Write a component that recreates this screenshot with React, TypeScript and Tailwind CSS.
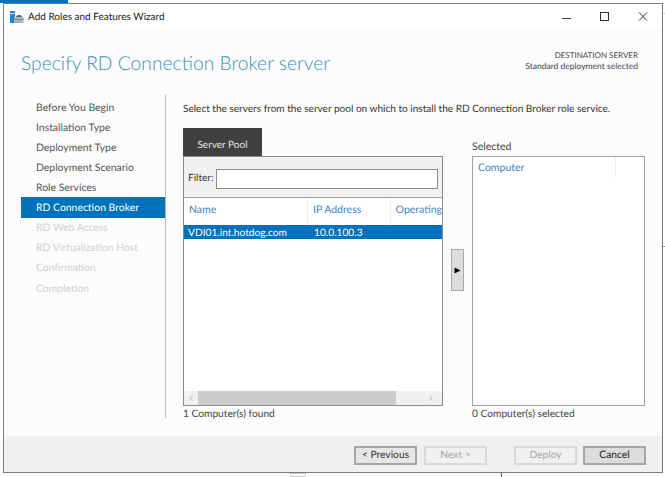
import { ChevronLeft, ChevronRight } from "lucide-react";

const steps = [
  { label: "Before You Begin", state: "done" },
  { label: "Installation Type", state: "done" },
  { label: "Deployment Type", state: "done" },
  { label: "Deployment Scenario", state: "done" },
  { label: "Role Services", state: "done" },
  { label: "RD Connection Broker", state: "active" },
  { label: "RD Web Access", state: "off" },
  { label: "RD Virtualization Host", state: "off" },
  { label: "Confirmation", state: "off" },
  { label: "Completion", state: "off" },
];

const WizardIcon = () => (
  <svg width="14" height="14" viewBox="0 0 14 14" className="shrink-0">
    <rect x="0" y="1" width="5" height="12" fill="#1c86d1" />
    <rect x="0" y="3" width="5" height="1" fill="#cfe6f7" />
    <path d="M6 6.5 L7.5 5 H10.5 L12 6.5 V7 H6 Z" fill="#5d6b75" />
    <rect x="4" y="7" width="9.5" height="6" fill="#a9b4bc" />
    <rect x="4" y="9" width="9.5" height="1" fill="#7d8a94" />
  </svg>
);

const FooterButton = ({
  label,
  disabled,
  dark,
}: {
  label: string;
  disabled?: boolean;
  dark?: boolean;
}) => (
  <div
    className={`w-[63px] h-[19px] flex items-center justify-center border-2 pt-[2px] text-[10.25px] ${
      disabled
        ? "border-[#d9d9d9] bg-[#f0f0f0] text-[#a6a6a6]"
        : dark
          ? "border-[#a6a6a6] bg-[#dcdcdc] text-[#1a1a1a]"
          : "border-[#a6a6a6] bg-[#e6e6e6] text-[#333333]"
    }`}
  >
    {label}
  </div>
);

export default function App() {
  return (
    <div className="relative w-[665px] h-[477px] overflow-hidden bg-white pl-[3px] pt-[3px] font-['Lato',sans-serif] [text-rendering:geometricPrecision]">
      {/* bits of the desktop showing behind the window */}
      <div className="absolute left-0 top-0 w-[68px] h-[3px] bg-[#0072c6]" />
      <div className="absolute left-[501px] top-[473px] w-px h-[4px] bg-[#555555]" />
      <div className="absolute left-[290px] top-[473px] w-[16px] h-[4px] border border-[#cccccc]" />
      <div className="absolute left-[663px] top-[13px] w-[2px] h-px bg-[#cccccc]" />
      <div className="absolute left-[663px] top-[246px] w-[2px] h-px bg-[#999999]" />

      <div className="w-[660px] h-[470px] flex flex-col border border-[#7a7a7a] bg-[#fcfcfc] text-[#333333]">
        {/* title bar */}
        <div className="h-[25px] shrink-0 bg-white flex items-center pl-[6px] pr-0 gap-[4px]">
          <WizardIcon />
          <span className="text-[10px] pt-[2px] text-[#1a1a1a] flex-1">Add Roles and Features Wizard</span>
          <svg width="100" height="12" viewBox="0 0 100 12" className="text-[#333333] mr-[13px] shrink-0">
            <path d="M13 7.5 H22" stroke="currentColor" strokeWidth="1" />
            <rect x="51.5" y="1.5" width="8" height="8" fill="none" stroke="currentColor" strokeWidth="1" />
            <path d="M90 1.5 L98 9.5 M98 1.5 L90 9.5" stroke="currentColor" strokeWidth="1" />
          </svg>
        </div>

        {/* header */}
        <div className="h-[66px] shrink-0 flex justify-between pl-[17px] pr-[24px]">
          <h1 className="mt-[21px] text-[19.3px] leading-[28px] text-[#3d8fb5] font-light">
            Specify RD Connection Broker server
          </h1>
          <div className="mt-[21px] text-right leading-[11px] text-[#444444]">
            <div className="text-[8px]">DESTINATION SERVER</div>
            <div className="text-[8.5px]">Standard deployment selected</div>
          </div>
        </div>

        {/* body */}
        <div className="flex-1 flex min-h-0">
          <div className="w-[144px] ml-[17px] shrink-0 pt-[2px]">
            {steps.map((step) => (
              <div
                key={step.label}
                className={`h-[20.1px] flex items-center pl-[15px] pt-[3px] text-[10.4px] ${
                  step.state === "active"
                    ? "bg-[#0072bc] text-white"
                    : step.state === "off"
                      ? "text-[#d0d0d0]"
                      : "text-[#555555]"
                }`}
              >
                {step.label}
              </div>
            ))}
          </div>
          <div className="w-px h-[323px] bg-[#b8b8b8] shrink-0" />

          <div className="flex-1 pl-[17px] pt-[7px]">
            <p className="text-[10.05px] leading-[15px] text-[#333333] whitespace-nowrap">
              Select the servers from the server pool on which to install the RD Connection Broker role service.
            </p>

            <div className="flex mt-[11px]">
              {/* server pool */}
              <div className="w-[260px] shrink-0">
                <div className="w-[79px] h-[28px] bg-[#404040] text-[#e8e8e8] text-[10px] flex items-center justify-center pt-[6px]">
                  Server Pool
                </div>
                <div className="h-[250px] flex flex-col border border-[#8c8c8c] bg-white">
                  <div className="h-[41px] shrink-0 flex items-center justify-between pl-[4px] pr-[4px] pt-[3px] bg-[#f0f0f0] border-b border-[#a0a0a0] text-[10px] text-[#333333]">
                    <span>Filter:</span>
                    <div className="w-[222px] h-[20px] bg-white border border-[#8c8c8c]" />
                  </div>
                  <div className="h-[27px] shrink-0 flex text-[10.5px] text-[#3a86c8] overflow-hidden whitespace-nowrap">
                    <span className="w-[126px] pl-[5px] pb-[1px] border-r border-[#eeeeee] h-full flex items-center">Name</span>
                    <span className="w-[84px] pl-[5px] pb-[1px] border-r border-[#eeeeee] h-full flex items-center">IP Address</span>
                    <span className="pl-[5px] pb-[1px] h-full flex items-center">Operating</span>
                  </div>
                  <div className="h-[14px] shrink-0 flex items-center bg-[#0072bc] text-white text-[10.2px] pt-[3px]">
                    <span className="w-[125px] pl-[4px]">VDI01.int.hotdog.com</span>
                    <span className="pl-[5px]">10.0.100.3</span>
                  </div>
                  <div className="flex-1" />
                  <div className="h-[14px] shrink-0 flex items-center bg-[#f0f0f0] text-[#a6a6a6]">
                    <ChevronLeft size={10} className="w-[14px]" />
                    <div className="w-[198px] h-full bg-[#cdcdcd]" />
                    <div className="flex-1" />
                    <ChevronRight size={10} className="w-[14px] mr-[4px]" />
                  </div>
                </div>
                <div className="mt-[1px] text-[10.2px] leading-[14px] text-[#444444]">1 Computer(s) found</div>
              </div>

              {/* add button */}
              <div className="w-[29px] shrink-0 pl-[8px] pt-[121px]">
                <div className="w-[13px] h-[42px] bg-[#dcdcdc] border border-[#a6a6a6] flex items-center justify-center">
                  <svg width="7" height="7" viewBox="0 0 7 7">
                    <path d="M0.5 0.5 L6.5 3.5 L0.5 6.5 Z" fill="#000000" />
                  </svg>
                </div>
              </div>

              {/* selected */}
              <div className="w-[173px] shrink-0">
                <div className="h-[28px] flex items-end pb-[2px] text-[10.5px] leading-[14px] text-[#444444]">Selected</div>
                <div className="h-[250px] border border-[#a0a0a0] bg-white">
                  <div className="h-[20px] flex items-center">
                    <span className="w-[143px] h-full pl-[5px] pt-[4px] flex items-center border-r border-[#eeeeee] text-[10.5px] text-[#3a86c8]">
                      Computer
                    </span>
                  </div>
                </div>
                <div className="mt-[1px] text-[10.2px] leading-[14px] text-[#444444]">0 Computer(s) selected</div>
              </div>
            </div>
          </div>
        </div>

        {/* footer */}
        <div className="h-[36px] shrink-0 bg-[#f0f0f0] flex items-center justify-end pr-[16px] pt-[2px]">
          <FooterButton label="< Previous" />
          <div className="w-[7px]" />
          <FooterButton label="Next >" disabled />
          <div className="w-[27px]" />
          <FooterButton label="Deploy" disabled />
          <div className="w-[6px]" />
          <FooterButton label="Cancel" dark />
        </div>
      </div>
    </div>
  );
}
